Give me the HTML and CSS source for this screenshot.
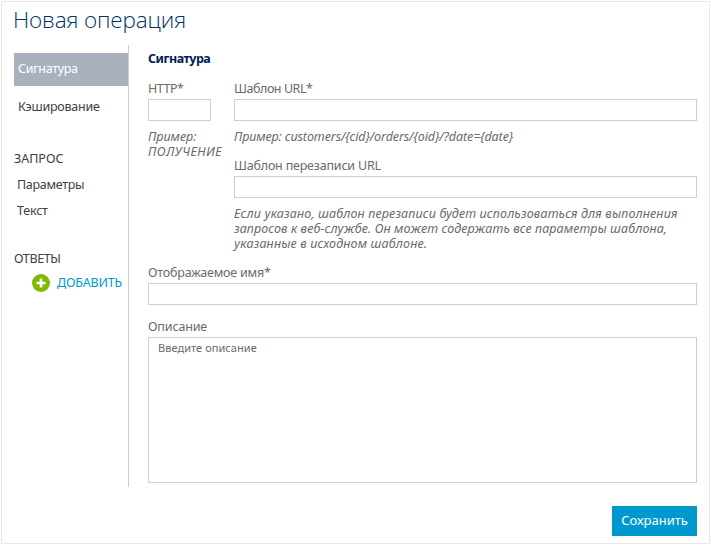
FILE: index.html
```html
<!DOCTYPE html>
<html lang="ru">
<head>
<meta charset="utf-8">
<title>Новая операция</title>
<link rel="stylesheet" href="styles.css">
</head>
<body>
<main class="dialog">
  <h1 class="title">Новая операция</h1>
  <div class="columns">
    <nav class="sidebar">
      <a class="nav-item active">Сигнатура</a>
      <a class="nav-item caching">Кэширование</a>
      <div class="nav-heading">ЗАПРОС</div>
      <a class="nav-item params">Параметры</a>
      <a class="nav-item">Текст</a>
      <div class="nav-heading responses">ОТВЕТЫ</div>
      <a class="add">
        <svg class="add-icon" viewBox="0 0 18 18"><circle cx="9" cy="9" r="9" fill="#7fba00"/><path d="M9 4.5v9M4.5 9h9" stroke="#fff" stroke-width="2.6"/></svg>
        <span>ДОБАВИТЬ</span>
      </a>
    </nav>
    <form class="form">
      <h2 class="section">Сигнатура</h2>
      <div class="signature">
        <div class="method">
          <label class="label label-http">HTTP*</label>
          <input class="field method-field" type="text">
          <p class="hint">Пример:<br><span class="verb">ПОЛУЧЕНИЕ</span></p>
        </div>
        <div class="urls">
          <label class="label label-url">Шаблон URL*</label>
          <input class="field" type="text">
          <p class="hint url-hint">Пример: customers/{cid}/orders/{oid}/?date={date}</p>
          <label class="label label-rewrite">Шаблон перезаписи URL</label>
          <input class="field" type="text">
          <p class="hint help">Если указано, шаблон перезаписи будет использоваться для выполнения<br><span class="help-mid">запросов к веб-службе. Он может содержать все параметры шаблона,</span><br>указанные в исходном шаблоне.</p>
        </div>
      </div>
      <label class="label label-name">Отображаемое имя*</label>
      <input class="field" type="text">
      <label class="label desc-label">Описание</label>
      <div class="description">Введите описание</div>
    </form>
  </div>
  <button class="save" type="button">Сохранить</button>
</main>
</body>
</html>
```
FILE: styles.css
```css
* { box-sizing: border-box; }
body {
  margin: 0;
  padding: 1px;
  height: 545px;
  background: #fff;
  font: 12.5px/16px "Noto Sans", "Open Sans", sans-serif;
  color: #6a6a6a;
  overflow: hidden;
}
.dialog {
  display: flex;
  flex-direction: column;
  width: 709px;
  height: 543px;
  border: 1px solid #e9e9e9;
  padding: 0 12px;
}
.title {
  margin: 0 0 0 -1px;
  height: 43px;
  font: 300 22.5px/36px "Open Sans", "Noto Sans", sans-serif;
  letter-spacing: -0.15px;
  color: #00336a;
}
.columns { display: flex; height: 442px; }
.sidebar {
  flex: 0 0 115px;
  margin-right: 19px;
  border-right: 1px solid #cfcfcf;
  color: #404040;
}
.nav-item { display: block; height: 26px; line-height: 26px; padding-left: 3px; letter-spacing: -0.2px; }
.nav-item.params { letter-spacing: -0.3px; }
.nav-item.active {
  height: 33px;
  line-height: 31px;
  margin: 8px 0;
  padding-left: 4px;
  background: #a9b1bf;
  color: #fff;
  letter-spacing: -0.3px;
}
.nav-item.caching { padding-left: 4px; margin-bottom: 31px; letter-spacing: -0.25px; }
.nav-heading { height: 21px; line-height: 16px; }
.nav-heading.responses { margin-top: 27px; letter-spacing: -0.4px; }
.add { display: flex; align-items: center; gap: 7px; height: 22px; margin-left: 18px; color: #0099cf; letter-spacing: -0.2px; }
.add-icon { width: 18px; height: 18px; }
.form { flex: 1; min-width: 0; }
.section { margin: 6px 0 14px; font-size: 12.5px; line-height: 16px; letter-spacing: -0.5px; color: #00204f; }
.label { display: block; height: 18px; line-height: 16px; }
.label-http { letter-spacing: -0.5px; }
.label-url { letter-spacing: -0.45px; }
.label-rewrite, .label-name { letter-spacing: -0.2px; }
.field {
  display: block;
  width: 100%;
  height: 22px;
  padding: 0;
  border: 1px solid #cfcfcf;
  background: #fff;
}
.signature { display: flex; height: 184px; }
.method { width: 86px; }
.method-field { width: 63px; }
.urls { flex: 1; min-width: 0; }
.hint { margin: 8px 0 0; line-height: 15px; font-style: italic; white-space: nowrap; }
.verb { letter-spacing: 0.45px; }
.url-hint { height: 29px; letter-spacing: -0.1px; }
.help { margin-top: 8px; letter-spacing: 0.15px; }
.help-mid { letter-spacing: 0.09px; }
.desc-label { margin-top: 14px; letter-spacing: -0.15px; }
.description {
  height: 146px;
  border: 1px solid #cfcfcf;
  padding: 2px 9px;
  font-size: 11px;
  letter-spacing: 0.05px;
}
.save {
  align-self: flex-end;
  width: 85px;
  height: 30px;
  margin-top: 19px;
  padding: 0 0 2px;
  border: 0;
  background: #0099cf;
  color: #fff;
  font: 13px/28px "Noto Sans", sans-serif;
}
```
